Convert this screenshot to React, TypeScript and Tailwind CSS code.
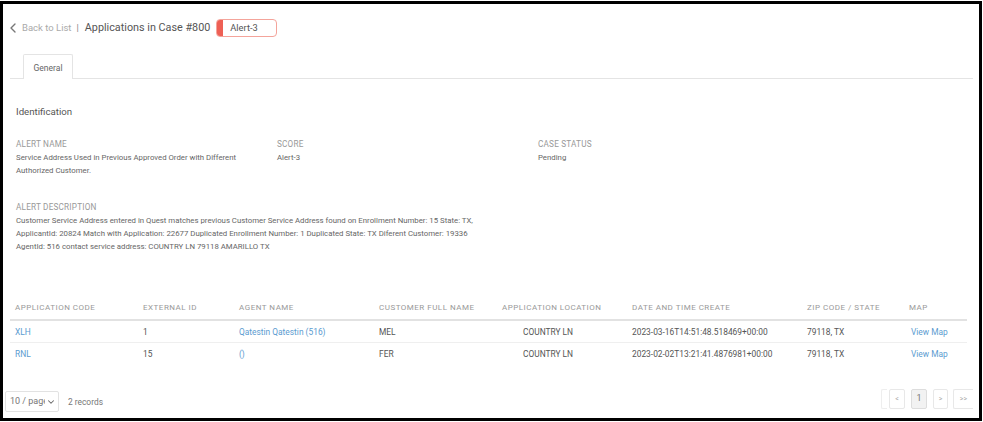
import { ChevronDown, ChevronLeft } from "lucide-react";

const columns = [
  "APPLICATION CODE",
  "EXTERNAL ID",
  "AGENT NAME",
  "CUSTOMER FULL NAME",
  "APPLICATION LOCATION",
  "DATE AND TIME CREATE",
  "ZIP CODE / STATE",
  "MAP",
];

const rows = [
  {
    code: "XLH",
    id: "1",
    agent: "Qatestin Qatestin (516)",
    customer: "MEL",
    location: "COUNTRY LN",
    date: "2023-03-16T14:51:48.518469+00:00",
    zip: "79118, TX",
  },
  {
    code: "RNL",
    id: "15",
    agent: "()",
    customer: "FER",
    location: "COUNTRY LN",
    date: "2023-02-02T13:21:41.4876981+00:00",
    zip: "79118, TX",
  },
];

const gridCols = "grid grid-cols-[128px_96px_140px_123px_130px_175px_102px_1fr]";

function Field({ label, children }: { label: string; children: React.ReactNode }) {
  return (
    <div>
      <div className="text-[8.2px] leading-[12px] tracking-[0.2px] text-[#999]">{label}</div>
      <div className="mt-[1px] text-[7.8px] leading-[13px] text-[#666]">{children}</div>
    </div>
  );
}

export default function App() {
  return (
    <div className="h-[422px] w-[983px] bg-white pt-[1px] font-['Roboto',sans-serif]">
      <div className="h-[420px] w-[982px] border-[3px] border-black pr-[6px] pl-[7px]">
        {/* Encabezado */}
        <div className="flex h-[50px] items-center pb-[2px]">
          <ChevronLeft size={16} strokeWidth={2} className="-ml-[5px] text-[#777]" />
          <span className="ml-[1px] text-[9.5px] text-[#aaa]">Back to List</span>
          <span className="ml-[5px] text-[9.5px] text-[#888]">|</span>
          <span className="ml-[6px] text-[10.8px] text-[#555]">Applications in Case #800</span>
          <div className="ml-[6px] flex h-[18px] w-[61px] items-center overflow-hidden rounded-[4px] border border-[#f4a49b] bg-white">
            <div className="h-full w-[6px] bg-[#ee6055]" />
            <span className="ml-[7px] text-[9.3px] text-[#555]">Alert-3</span>
          </div>
        </div>

        {/* Tabs */}
        <div className="flex h-[25px] border-b border-[#e4e4e4] pl-[13px]">
          <div className="flex h-[25px] w-[50px] items-center justify-center rounded-t-[2px] border border-b-0 border-[#e4e4e4] bg-white pt-[2px] text-[8.5px] text-[#666]">
            General
          </div>
        </div>

        <div className="pt-[26px] pl-[6px] text-[9.7px] leading-[14px] text-[#555]">Identification</div>

        {/* Datos de la alerta */}
        <div className="mt-[19px] grid grid-cols-[261px_261px_1fr] pl-[6px]">
          <Field label="ALERT NAME">
            Service Address Used in Previous Approved Order with Different
            <br />
            Authorized Customer.
          </Field>
          <Field label="SCORE">Alert-3</Field>
          <Field label="CASE STATUS">Pending</Field>
        </div>

        <div className="mt-[24px] pl-[6px]">
          <Field label="ALERT DESCRIPTION">
            Customer Service Address entered in Quest matches previous Customer Service Address found on Enrollment Number: 15 State: TX,
            <br />
            ApplicantId: 20824 Match with Application: 22677 Duplicated Enrollment Number: 1 Duplicated State: TX Diferent Customer: 19336
            <br />
            AgentId: 516 contact service address: COUNTRY LN 79118 AMARILLO TX
          </Field>
        </div>

        {/* Tabla */}
        <div className="mt-[45px] w-[957px]">
          <div className={`${gridCols} h-[23px] items-center border-b-2 border-[#e2e2e2] pb-[2px] pl-[5px] text-[8px] tracking-[0.5px] text-[#999]`}>
            {columns.map((c) => (
              <div key={c}>{c}</div>
            ))}
          </div>
          {rows.map((r) => (
            <div key={r.code} className={`${gridCols} h-[22px] items-center border-b border-[#efefef] pt-[1px] pl-[5px] text-[8.4px] text-[#555] last:border-b-0`}>
              <a className="text-[#5b9bd0]">{r.code}</a>
              <div>{r.id}</div>
              <a className="text-[#5b9bd0]">{r.agent}</a>
              <div>{r.customer}</div>
              <div className="pl-[21px]">{r.location}</div>
              <div>{r.date}</div>
              <div>{r.zip}</div>
              <a className="pl-[2px] text-[#5b9bd0]">View Map</a>
            </div>
          ))}
        </div>

        {/* Paginacion */}
        <div className="mt-[24px] flex items-start justify-between">
          <div className="-ml-[5px] flex items-center pt-[2px]">
            <div className="flex h-[21px] w-[54px] items-center justify-between rounded-[2px] border border-[#e2e2e2] pt-[1px] pr-[2px] pl-[4px] text-[9px] text-[#777]">
              <span className="w-[35px] overflow-hidden whitespace-nowrap">10 / page</span>
              <ChevronDown size={10} strokeWidth={2.5} className="shrink-0 text-[#666]" />
            </div>
            <span className="ml-[9px] pt-[2px] text-[8.4px] text-[#777]">2 records</span>
          </div>
          <div className="flex items-center text-[7px] text-[#aaa]">
            <div className="h-[20px] w-[6px] rounded-l-[2px] border border-r-0 border-[#eee]" />
            <div className="ml-[2px] flex h-[20px] w-[16px] items-center justify-center rounded-[2px] border border-[#e8e8e8]">&lt;</div>
            <div className="ml-[6px] flex h-[20px] w-[16px] items-center justify-center rounded-[2px] border border-[#ddd] bg-[#f2f2f2] text-[9px] text-[#777]">1</div>
            <div className="ml-[6px] flex h-[20px] w-[15px] items-center justify-center rounded-[2px] border border-[#e8e8e8]">&gt;</div>
            <div className="ml-[5px] flex h-[20px] w-[20px] items-center justify-center rounded-l-[2px] border border-r-0 border-[#e8e8e8]">&gt;&gt;</div>
          </div>
        </div>
      </div>
    </div>
  );
}
